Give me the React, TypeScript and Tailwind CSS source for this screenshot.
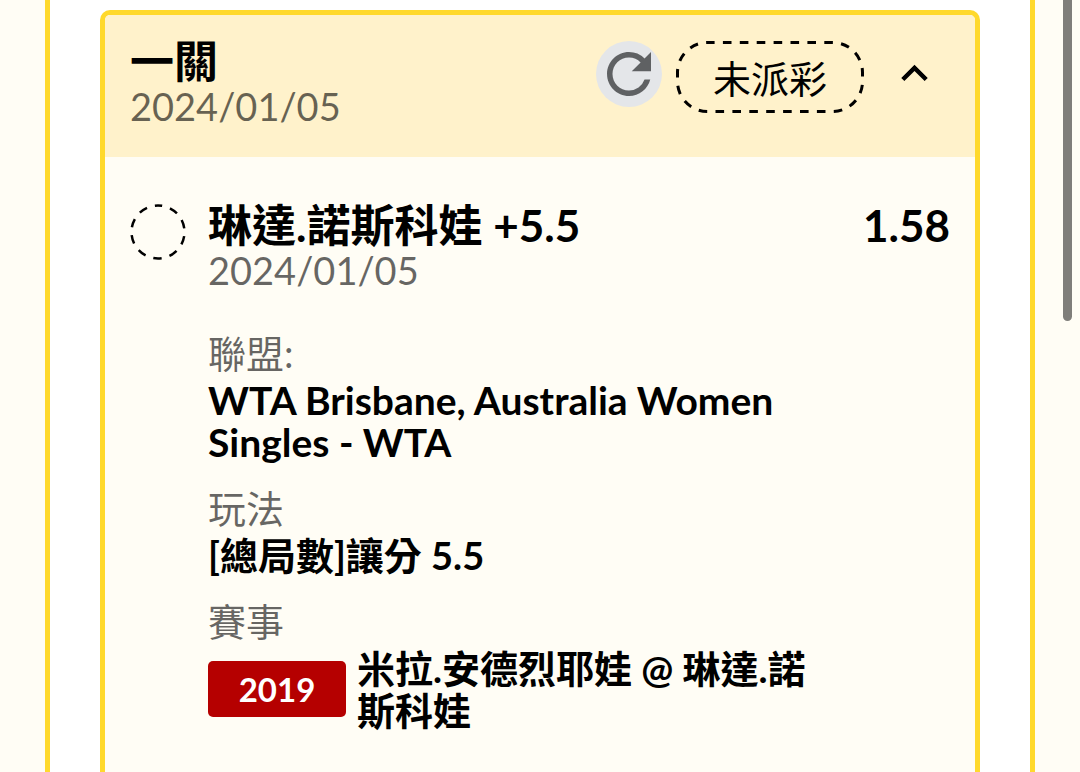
import { MdExpandLess, MdRefresh } from 'react-icons/md';

const bet = {
  title: '一關',
  date: '2024/01/05',
  status: '未派彩',
  pick: '琳達.諾斯科娃 +5.5',
  pickDate: '2024/01/05',
  odds: '1.58',
  league: 'WTA Brisbane, Australia Women Singles - WTA',
  market: '[總局數]讓分 5.5',
  eventNo: '2019',
  match: '米拉.安德烈耶娃 @ 琳達.諾斯科娃',
};

function StatusPill({ label }: { label: string }) {
  return (
    <div className="relative mt-0.5 flex h-[72px] w-[188px] items-center justify-center pt-0.5 text-[38px] leading-[42px]">
      <svg className="absolute inset-0" width="188" height="72" fill="none" stroke="#000" strokeWidth="3">
        <rect x="1.5" y="1.5" width="185" height="69" rx="30" strokeDasharray="8.6 8.3" strokeDashoffset="1.5" />
      </svg>
      {label}
    </div>
  );
}

function PendingCircle() {
  return (
    <svg className="mt-px shrink-0" width="56" height="56" viewBox="0 0 56 56" fill="none" stroke="#000" strokeWidth="2.5">
      <circle cx="28" cy="28" r="26.5" strokeDasharray="8.6 8.05" strokeDashoffset="4.3" transform="rotate(-90 28 28)" />
    </svg>
  );
}

export default function App() {
  return (
    <div className="relative flex min-h-screen bg-[#fffdf5] px-[45px] font-['Lato','Noto_Sans_CJK_TC',sans-serif] text-black">
      <main className="flex flex-1 border-x-[5px] border-[#ffd92c] bg-white px-[50px] pt-[10px]">
        <article className="flex-1 overflow-hidden rounded-t-[10px] border-x-[5px] border-t-[5px] border-[#ffd92c] bg-[#fffdf5]">
          {/* Header */}
          <header className="flex h-[142px] items-start bg-[#fff2cb] pl-[25px] pr-[34px] pt-6">
            <div className="flex-1">
              <h1 className="text-[44px] font-bold leading-[44px]">{bet.title}</h1>
              <p className="text-[38px] leading-[46px] text-black/60">{bet.date}</p>
            </div>
            <button
              type="button"
              aria-label="重新整理"
              className="mr-[14px] mt-0.5 flex h-[66px] w-[66px] items-center justify-center rounded-full bg-[#e4e6e9] text-[#5f6163]"
            >
              <MdRefresh size={66} />
            </button>
            <StatusPill label={bet.status} />
            <button type="button" aria-label="收合" className="ml-6 mt-2">
              <MdExpandLess size={53} />
            </button>
          </header>

          {/* Selection */}
          <section className="flex px-[25px] pt-[46px]">
            <PendingCircle />
            <div className="ml-[22px] flex-1">
              <div className="flex justify-between text-[44px] font-bold leading-[44px]">
                <h2>{bet.pick}</h2>
                <span>{bet.odds}</span>
              </div>
              <p className="text-[38px] leading-[46px] text-black/60">{bet.pickDate}</p>

              <dl className="mt-[39px] pr-[104px] text-[38px] font-bold leading-[42px]">
                <dt className="mb-[5px] font-normal text-black/60">聯盟:</dt>
                <dd className="text-[39px] leading-[42px]">{bet.league}</dd>
                <dt className="mb-[5px] mt-6 font-normal text-black/60">玩法</dt>
                <dd>{bet.market}</dd>
                <dt className="mb-[5px] mt-6 font-normal text-black/60">賽事</dt>
                <dd className="flex items-center">
                  <span className="mr-[11px] flex h-14 w-[138px] shrink-0 items-center justify-center rounded-[5px] bg-[#b50000] text-[33px] text-white">
                    {bet.eventNo}
                  </span>
                  <span className="pr-6">{bet.match}</span>
                </dd>
              </dl>
            </div>
          </section>
        </article>
      </main>
      {/* Scroll thumb */}
      <div className="absolute right-2 top-0 h-[321px] w-[9px] rounded-b-full bg-[#7f7e7a]" />
    </div>
  );
}
